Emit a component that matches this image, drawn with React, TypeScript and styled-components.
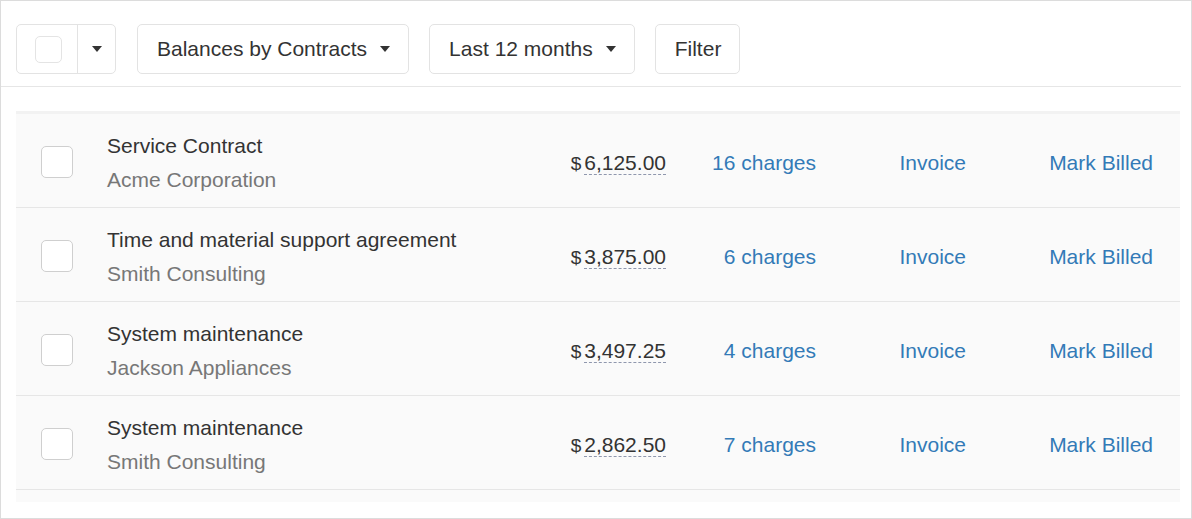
import styled, { createGlobalStyle } from "styled-components";

const GlobalStyle = createGlobalStyle`
  body {
    margin: 0;
    background: #fff;
    font-family: "Liberation Sans", Arial, Helvetica, sans-serif;
    color: #333;
  }
`;

type Contract = {
  title: string;
  customer: string;
  amount: string;
  charges: number;
};

const contracts: Contract[] = [
  { title: "Service Contract", customer: "Acme Corporation", amount: "6,125.00", charges: 16 },
  {
    title: "Time and material support agreement",
    customer: "Smith Consulting",
    amount: "3,875.00",
    charges: 6,
  },
  { title: "System maintenance", customer: "Jackson Appliances", amount: "3,497.25", charges: 4 },
  { title: "System maintenance", customer: "Smith Consulting", amount: "2,862.50", charges: 7 },
];

export default function App() {
  return (
    <>
      <GlobalStyle />
      <Frame>
        <Toolbar>
          <SelectGroup>
            <SelectCheck>
              <SmallBox />
            </SelectCheck>
            <SelectCaret>
              <Caret $gap={0} />
            </SelectCaret>
          </SelectGroup>
          <ToolButton>
            Balances by Contracts
            <Caret />
          </ToolButton>
          <ToolButton>
            Last 12 months
            <Caret />
          </ToolButton>
          <ToolButton>Filter</ToolButton>
        </Toolbar>
        <ScrollArea>
          <List>
            {contracts.map((c, i) => (
              <Row key={i}>
                <RowBox />
                <Info>
                  <Title>{c.title}</Title>
                  <Customer>{c.customer}</Customer>
                </Info>
                <Amount>
                  <Dollar>$</Dollar>
                  <Value>{c.amount}</Value>
                </Amount>
                <LinkCell>
                  <a href="#">{c.charges} charges</a>
                </LinkCell>
                <LinkCell>
                  <a href="#">Invoice</a>
                </LinkCell>
                <LinkCell>
                  <a href="#">Mark Billed</a>
                </LinkCell>
              </Row>
            ))}
          </List>
        </ScrollArea>
      </Frame>
    </>
  );
}

const Frame = styled.div`
  width: 1192px;
  height: 519px;
  box-sizing: border-box;
  border: 1px solid #dcdcdc;
  background: #fff;
  overflow: hidden;
`;

const Toolbar = styled.div`
  display: flex;
  align-items: center;
  gap: 20px;
  width: 1180px;
  box-sizing: border-box;
  padding: 23px 0 12px 15px;
  border-bottom: 1px solid #e6e6e6;
`;

const buttonBase = `
  height: 50px;
  box-sizing: border-box;
  border: 1px solid #e3e3e3;
  border-radius: 5px;
  background: #fff;
`;

const SelectGroup = styled.div`
  ${buttonBase}
  display: flex;
  width: 100px;
  margin-right: 1px;
`;

const SelectCheck = styled.div`
  width: 61px;
  display: flex;
  align-items: center;
  justify-content: center;
  padding-left: 2px;
  box-sizing: border-box;
  border-right: 1px solid #e3e3e3;
`;

const SelectCaret = styled.div`
  flex: 1;
  display: flex;
  align-items: center;
  justify-content: center;
`;

const SmallBox = styled.span`
  width: 27px;
  height: 27px;
  box-sizing: border-box;
  border: 1px solid #e4e4e4;
  border-radius: 5px;
`;

const ToolButton = styled.button`
  ${buttonBase}
  display: flex;
  align-items: center;
  padding: 0 18px 0 19px;
  font-family: inherit;
  font-size: 21px;
  color: #333;
`;

const Caret = styled.span<{ $gap?: number }>`
  display: inline-block;
  width: 0;
  height: 0;
  margin-left: ${(p) => (p.$gap ?? 13)}px;
  border-left: 5.5px solid transparent;
  border-right: 5.5px solid transparent;
  border-top: 6px solid #333;
`;

const ScrollArea = styled.div`
  padding: 24px 11px 0 15px;
`;

const List = styled.div`
  background: #fafafa;
  border-top: 3px solid #f2f2f2;
  padding-bottom: 12px;
`;

const Row = styled.div`
  display: grid;
  grid-template-columns: 32px 1fr auto 150px 150px 187px;
  align-items: center;
  height: 94px;
  box-sizing: border-box;
  padding: 2px 27px 0 25px;
  border-bottom: 1px solid #e6e6e6;
`;

const RowBox = styled.span`
  width: 32px;
  height: 32px;
  box-sizing: border-box;
  border: 1px solid #cfcfcf;
  border-radius: 5px;
  background: #fff;
`;

const Info = styled.div`
  margin-left: 34px;
  margin-top: 2px;
  font-size: 21px;
  line-height: 34px;
`;

const Title = styled.div`
  color: #333;
`;

const Customer = styled.div`
  color: #777;
`;

const Amount = styled.div`
  display: flex;
  align-items: baseline;
  margin-top: 4px;
  font-size: 21px;
  color: #333;
`;

const Dollar = styled.span`
  font-size: 19px;
  margin-right: 3px;
`;

const Value = styled.span`
  line-height: 22px;
  border-bottom: 1px dashed #8f97ad;
`;

const LinkCell = styled.div`
  text-align: right;
  margin-top: 2px;
  font-size: 21px;
  line-height: 34px;

  a {
    color: #337ab7;
    text-decoration: none;
  }
`;
